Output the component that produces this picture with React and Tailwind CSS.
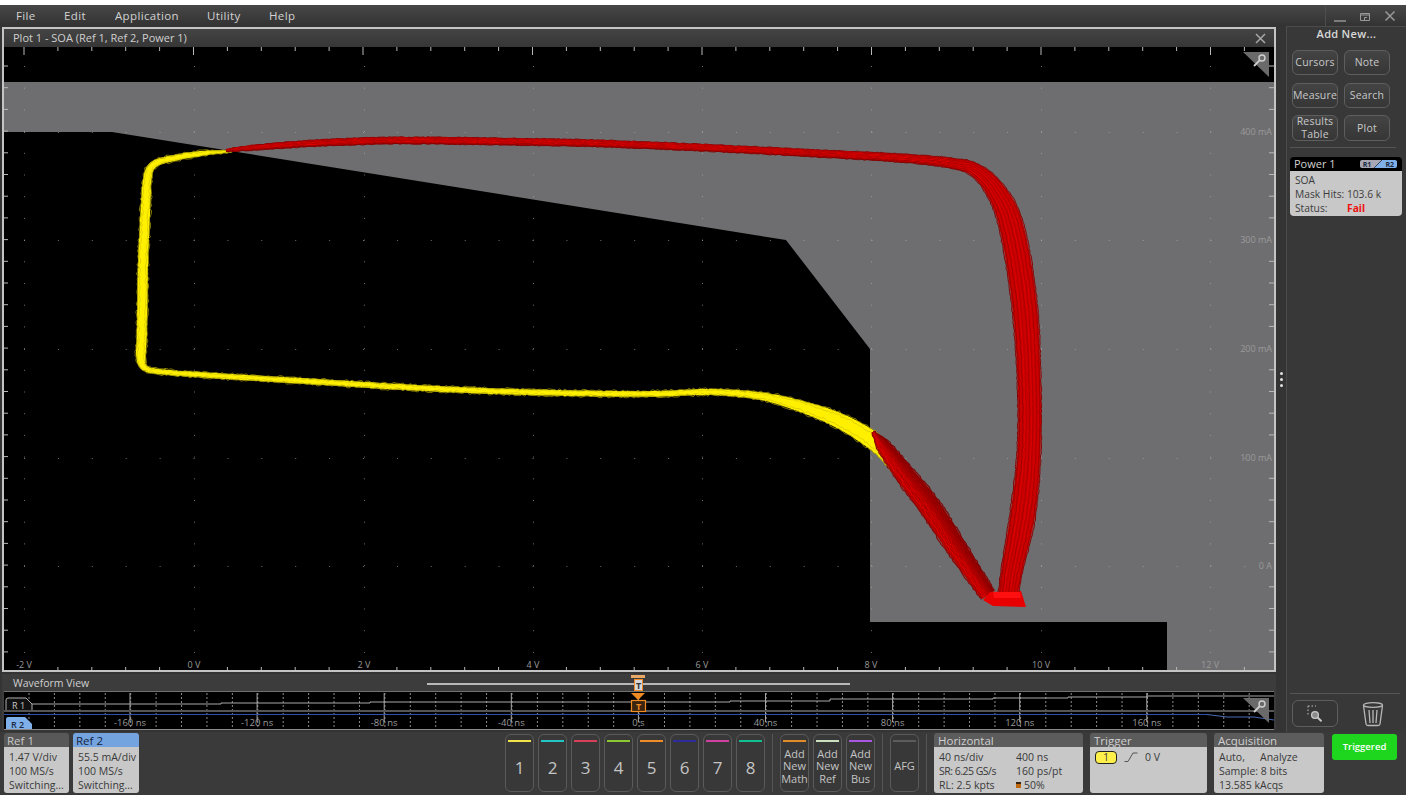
import React from "react";

// --- trace helpers: catmull-rom sampling of [x, y, halfWidth] points
const sample = (pts) => {
  const out = [];
  for (let i = 0; i < pts.length - 1; i++) {
    const p0 = pts[Math.max(i - 1, 0)];
    const p1 = pts[i];
    const p2 = pts[i + 1];
    const p3 = pts[Math.min(i + 2, pts.length - 1)];
    // about one sample every 2.5px so the jitter stays fine grained
    const steps = Math.max(2, Math.ceil(Math.hypot(p2[0] - p1[0], p2[1] - p1[1]) / 2.5));
    for (let s = 0; s < steps; s++) {
      const t = s / steps;
      const c = [0, 1, 2].map(
        (k) =>
          0.5 *
          (2 * p1[k] +
            (p2[k] - p0[k]) * t +
            (2 * p0[k] - 5 * p1[k] + 4 * p2[k] - p3[k]) * t * t +
            (3 * p1[k] - p0[k] - 3 * p2[k] + p3[k]) * t * t * t)
      );
      out.push(c);
    }
  }
  out.push(pts[pts.length - 1]);
  return out;
};

const noise = (n) => {
  const v = Math.sin(n * 12.9898) * 43758.5453;
  return v - Math.floor(v) - 0.5;
};

const offsetLine = (line, t, jitter = 0, seed = 1) =>
  line.map((p, i) => {
    const a = line[Math.max(i - 1, 0)];
    const b = line[Math.min(i + 1, line.length - 1)];
    const dx = b[0] - a[0];
    const dy = b[1] - a[1];
    const len = Math.hypot(dx, dy) || 1;
    const d = p[2] * t + noise(i * 1.7 + seed) * jitter;
    return [p[0] + (-dy / len) * d, p[1] + (dx / len) * d];
  });

const toPath = (pts) =>
  "M" + pts.map((p) => p[0].toFixed(1) + " " + p[1].toFixed(1)).join("L");

const YELLOW = [
  [232, 151, 1.2],
  [210, 152.5, 2.2],
  [187, 155.5, 3],
  [165, 160, 3.4],
  [153, 165, 3.8],
  [148, 175, 4.4],
  [146, 197, 5],
  [144.5, 230, 5.2],
  [143, 263, 5.4],
  [142, 330, 5.4],
  [141, 357, 5],
  [145, 368, 3.2],
  [163, 372, 2.8],
  [220, 376, 2.8],
  [320, 382, 3],
  [420, 388, 3],
  [520, 392, 3],
  [640, 394, 3],
  [710, 392, 3.2],
  [760, 396, 4],
  [800, 406, 6],
  [840, 421, 8],
  [873, 441, 9],
  [886, 458, 5],
  [899, 479, 1],
];

const RED_TOP = [
  [226, 150.5, 1],
  [250, 148, 2.4],
  [320, 143, 3.2],
  [400, 140.5, 3.4],
  [500, 141.5, 3.4],
  [600, 143.5, 3.4],
  [700, 147.5, 3.4],
  [800, 152.5, 3.6],
  [900, 158, 4.2],
  [950, 163, 5.2],
  [975, 170, 7],
  [995, 190, 10],
  [1011, 225, 12.5],
  [1024, 300, 13],
  [1029, 380, 12],
  [1029, 450, 12],
  [1023, 513, 13],
  [1012, 570, 11],
  [1008, 597, 10],
];

const RED_LEFT = [
  [873, 432, 1],
  [884, 447, 7],
  [906, 476, 10],
  [930, 507, 11],
  [960, 553, 10],
  [988, 595, 8],
];

const Band = ({ pts, colors, jitter, base, seed = 1, weight = 0.8 }) => {
  const line = sample(pts);
  const edgeA = offsetLine(line, 0.95);
  const edgeB = offsetLine(line, -0.95).reverse();
  return (
    <g fill="none">
      <path d={toPath([...edgeA, ...edgeB]) + "Z"} fill={base} />
      {colors.map((c, i) => {
        const t = colors.length > 1 ? -1 + (2 * i) / (colors.length - 1) : 0;
        return (
          <path
            key={i}
            d={toPath(offsetLine(line, t, jitter, seed + i * 3.1))}
            stroke={c}
            strokeWidth={weight}
          />
        );
      })}
    </g>
  );
};

const Traces = () => (
  <g>
    <Band
      pts={YELLOW}
      base="#fff000"
      jitter={2.2}
      colors={["#a89c00", "#d8cc00", "#fff000", "#fff000", "#d8cc00", "#a89c00"]}
    />
    <Band
      pts={RED_LEFT}
      base="#a30000"
      jitter={1.4}
      seed={9}
      weight={1.2}
      colors={["#7d0505", "#860000", "#8c0000", "#960000", "#a80000", "#b30000", "#c80000", "#d40000", "#cc0000", "#e00000", "#c00000", "#8c0505"]}
    />
    <polygon points="990,592 1021,591 1026,607 993,606 983,600" fill="#e80000" />
    <Band
      pts={RED_TOP}
      base="#c80000"
      jitter={1}
      seed={4}
      weight={1}
      colors={["#8c0000", "#a00000", "#cc0000", "#a80000", "#d80000", "#b00000", "#e00000", "#a80000", "#d00000", "#b80000", "#e00000", "#a00000", "#c80000", "#980000", "#850000"]}
    />
    <polygon points="993,592 1020,592 1021,598 994,598" fill="#ff1010" />
  </g>
);

// --- scope graticule of the plot
const majorX = [24, 194, 364, 533, 702, 871, 1041, 1210];
const majorY = [132, 240, 349, 458, 566];

const Graticule = () => {
  const dots = [];
  majorX.forEach((x) => {
    for (let y = 66; y < 660; y += 21.7) dots.push([x, y]);
  });
  majorY.forEach((y) => {
    for (let x = 24; x < 1270; x += 33.9) dots.push([x, y]);
  });
  const xTicks = [];
  for (let x = 24; x < 1274; x += 33.9) xTicks.push(x);
  const yTicks = [];
  for (let y = 66; y < 668; y += 21.7) yTicks.push(y);
  return (
    <g>
      {dots.map((d, i) => (
        <rect key={i} x={d[0]} y={d[1]} width="1" height="1" fill="#b5b5b5" opacity="0.6" />
      ))}
      {xTicks.map((x, i) => {
        const major = i % 5 === 0;
        return (
          <g key={i} stroke="#b8b8b8" strokeWidth="1">
            <line x1={x} x2={x} y1="47" y2={major ? 55 : 51} />
            {/* the axis labels sit where the bottom major ticks would be */}
            {!major && <line x1={x} x2={x} y1="667" y2="670" />}
          </g>
        );
      })}
      {yTicks.map((y, i) => (
        <g key={i} stroke="#b8b8b8" strokeWidth="1">
          <line x1="4" x2="8" y1={y} y2={y} />
          {(i - 3) % 5 !== 0 && <line x1="1269" x2="1274" y1={y} y2={y} />}
        </g>
      ))}
    </g>
  );
};

// corner zoom pin
const Pin = ({ x, y }) => (
  <g transform={`translate(${x} ${y})`}>
    <polygon points="0,0 26,0 26,25" fill="#6a6a6a" />
    <circle cx="19" cy="6" r="3" fill="none" stroke="#d0d0d0" strokeWidth="1.4" />
    <line x1="16.8" y1="8.2" x2="11" y2="14" stroke="#d0d0d0" strokeWidth="1.8" />
  </g>
);

const PlotChart = () => (
  <svg className="block w-[1270px] h-[623px]" viewBox="4 47 1270 623">
    <rect x="4" y="47" width="1270" height="623" fill="#000" />
    <polygon
      points="4,82 1274,82 1274,670 1167,670 1167,622 870,622 870,349 786,240 112,132 4,132"
      fill="#6e6e70"
    />
    <Graticule />
    <Traces />
    <Pin x={1243} y={52} />
    <g fontFamily="'Open Sans', sans-serif" fontSize="9" fill="#9a9a9a">
      {["-2 V", "0 V", "2 V", "4 V", "6 V", "8 V", "10 V", "12 V"].map((t, i) => (
        <text key={t} x={majorX[i]} y="668" textAnchor="middle">
          {t}
        </text>
      ))}
      {["400 mA", "300 mA", "200 mA", "100 mA", "0 A"].map((t, i) => (
        <text key={t} x="1272" y={majorY[i] + 3} textAnchor="end">
          {t}
        </text>
      ))}
    </g>
  </svg>
);

const timeLabels = ["-160 ns", "-120 ns", "-80 ns", "-40 ns", "0 s", "40 ns", "80 ns", "120 ns", "160 ns"];

const WaveformStrip = () => {
  const minor = [];
  for (let x = 29; x < 1274; x += 25.42) minor.push(x);
  return (
    <svg className="block w-[1270px] h-[37px]" viewBox="4 692 1270 37">
      <rect x="4" y="692" width="1270" height="37" fill="#000" />
      {minor.map((x) => (
        <line key={x} x1={x} x2={x} y1="693" y2="729" stroke="#c8c8c8" strokeWidth="1" strokeDasharray="2 2" opacity="0.7" />
      ))}
      {timeLabels.map((t, i) => (
        <line key={t} x1={130 + i * 127.1} x2={130 + i * 127.1} y1="693" y2="722" stroke="#a8a8a8" strokeWidth="1" />
      ))}
      <path d="M32 704H221V703H370V702H624V702H730V701H830V699H993V698H1068V697H1147V696H1274" fill="none" stroke="#a8a8a8" strokeWidth="1" />
      <path d="M6 711V700Q6 698 8 698H26L32 704L32 711Z" fill="#111" stroke="#b0b0b0" strokeWidth="1" />
      <text x="12" y="709" fontFamily="'Open Sans', sans-serif" fontSize="9" fill="#c8c8c8">R 1</text>
      <rect x="4" y="710" width="1270" height="2" fill="#555" />
      <line x1="4" x2="1207" y1="714.5" y2="714.5" stroke="#2f4fa8" strokeWidth="1" />
      <path d="M1207 714.5L1227 717L1254 717L1274 720" fill="none" stroke="#4a6ab8" strokeWidth="1" />
      <path d="M6 729V719Q6 717 8 717H25L32 724V729Z" fill="#7fb0ea" />
      <text x="11" y="727.5" fontFamily="'Open Sans', sans-serif" fontSize="9" fontWeight="600" fill="#1c2a44">R 2</text>
      <g fontFamily="'Open Sans', sans-serif" fontSize="9.5" fill="#9a9a9a">
        {timeLabels.map((t, i) => (
          <text key={t} x={130 + i * 127.1} y="726" textAnchor="middle">
            {t}
          </text>
        ))}
      </g>
      <polygon points="631,693 645,693 638,700" fill="#f08a24" />
      <rect x="631.5" y="700.5" width="14" height="11" fill="#3a2410" stroke="#f08a24" strokeWidth="1.2" />
      <text x="638.5" y="710" textAnchor="middle" fontFamily="'Open Sans', sans-serif" fontSize="9" fontWeight="700" fill="#f08a24">T</text>
      <Pin x={1243} y={698} />
    </svg>
  );
};

const PanelButton = ({ children, className = "" }) => (
  <div
    className={
      "w-[46px] flex items-center justify-center text-center rounded-md border border-[#5e5e5e] bg-gradient-to-b from-[#444444] to-[#363636] text-[#c8c8c8] text-[10.5px] leading-[13px] tracking-[0.2px] " +
      className
    }
  >
    {children}
  </div>
);

const Channel = ({ color, children, big }) => (
  <div className="w-[29px] h-[58px] shrink-0 flex flex-col items-center rounded-md border border-[#5a5a5a] bg-[#383838] pt-[5px]">
    <div className={"w-[23px] h-[2px] shrink-0 " + color} />
    <div
      className={
        big
          ? "flex-1 flex items-center text-[17px] text-[#c4c4c4] pt-[2px]"
          : "flex-1 flex items-center text-center text-[11px] leading-[12.5px] text-[#c4c4c4]"
      }
    >
      {children}
    </div>
  </div>
);

const InfoCard = ({ title, titleClass, width, children }) => (
  <div className={"h-[60px] rounded-[3px] overflow-hidden flex flex-col shrink-0 " + width}>
    <div className={"h-[14px] shrink-0 px-[3px] text-[11.5px] leading-[15px] " + titleClass}>{title}</div>
    <div className="flex-1 bg-[#c8c8c8] text-[#3a3a3a] text-[10.5px] leading-[14px] px-[5px] pt-[3px] whitespace-nowrap">
      {children}
    </div>
  </div>
);

const Sep = () => <div className="w-px h-[58px] bg-[#555555] shrink-0" />;

const channels = [
  ["1", "bg-[#f0e44a]"],
  ["2", "bg-[#22c4c4]"],
  ["3", "bg-[#d8405a]"],
  ["4", "bg-[#8cc832]"],
  ["5", "bg-[#f08c28]"],
  ["6", "bg-[#2c2c9c]"],
  ["7", "bg-[#d040a0]"],
  ["8", "bg-[#10c090]"],
];

export default function App() {
  return (
    <div
      className="w-[1406px] h-[797px] overflow-hidden bg-white pt-[5px] flex flex-col"
      style={{ fontFamily: "'Open Sans', 'Noto Sans', sans-serif" }}
    >
      {/* Menu bar */}
      <div className="h-[21px] shrink-0 flex items-center bg-gradient-to-b from-[#474747] to-[#333333] text-[#d2d2d2] text-[11.5px] tracking-[0.35px]">
        <div className="flex w-[1325px] pl-[16px]">
          <span className="w-[48px]">File</span>
          <span className="w-[51px]">Edit</span>
          <span className="w-[92px]">Application</span>
          <span className="w-[62px]">Utility</span>
          <span>Help</span>
        </div>
        <div className="h-full w-px bg-[#4e4e4e]" />
        <div className="flex items-center flex-1 pl-[8px] gap-[13px] text-[#9a9a9a]">
          <svg width="12" height="12" viewBox="0 0 12 12"><path d="M0 11H12" stroke="currentColor" strokeWidth="1.4" /></svg>
          <svg width="12" height="12" viewBox="0 0 12 12" fill="none" stroke="currentColor"><path d="M1.5 3.5H10.5V10.5H1.5Z" /><path d="M1.5 5H10.5" /><path d="M5.5 10.5V7.5H8" /></svg>
          <svg width="12" height="12" viewBox="0 0 12 12" fill="none" stroke="currentColor" strokeWidth="1.5"><path d="M1.5 1.5L10.5 10.5M10.5 1.5L1.5 10.5" /></svg>
        </div>
      </div>

      {/* Middle */}
      <div className="h-[706px] shrink-0 flex bg-[#343434]">
        <div className="w-[1276px] pl-[2px] pt-[1px] shrink-0 flex flex-col gap-[2px]">
          <div className="w-[1274px] border-2 border-[#c4c4c4] border-b-[2px] flex flex-col">
            <div className="h-[18px] flex items-center justify-between bg-gradient-to-b from-[#444444] to-[#363636] pl-[9px] pr-[8px] pt-[1px] text-[#cfcfcf] text-[11px]">
              <span>Plot 1 - SOA (Ref 1, Ref 2, Power 1)</span>
              <svg width="11" height="11" viewBox="0 0 11 11" fill="none" stroke="#a8a8a8" strokeWidth="1.5"><path d="M1 1L10 10M10 1L1 10" /></svg>
            </div>
            <PlotChart />
          </div>
          <div className="relative w-[1274px] px-[2px] flex flex-col bg-[#3c3c3c]">
            <div className="h-[18px] flex items-center pl-[9px] pt-[3px] text-[#cfcfcf] text-[10.5px] border-b border-[#707070]">
              Waveform View
            </div>
            <WaveformStrip />
            <div className="absolute left-[425px] top-[9px] w-[423px] h-[2px] bg-[#b8b8b8]" />
            <div className="absolute left-[629px] top-[1px] w-[14px] h-[3px] bg-[#e8a868]" />
            <div className="absolute left-[632px] top-[5px] w-[9px] h-[12px] border border-[#f08a24] bg-[#d8d8d8] flex items-center justify-center text-[9px] font-bold leading-none text-[#333]">
              T
            </div>
            <div className="h-[1px] bg-[#8a8a8a]" />
          </div>
        </div>

        {/* gutter */}
        <div className="w-[10px] shrink-0 flex flex-col items-center justify-center gap-[3px]">
          <div className="w-[3px] h-[3px] rounded-full bg-[#e0e0e0]" />
          <div className="w-[3px] h-[3px] rounded-full bg-[#e0e0e0]" />
          <div className="w-[3px] h-[3px] rounded-full bg-[#e0e0e0]" />
        </div>

        {/* Right panel */}
        <div className="flex-1 border-l border-t border-[#4c4c4c] flex flex-col px-[3px] pb-[5px] bg-[#383838]">
          <div className="h-[23px] flex items-center justify-center pb-[9px] font-semibold text-[11px] tracking-[0.3px] text-[#d8d8d8]">
            Add New...
          </div>
          <div className="grid grid-cols-[46px_46px] gap-x-[6px] gap-y-[8px] pl-[2px]">
            <PanelButton className="h-[25px]">Cursors</PanelButton>
            <PanelButton className="h-[25px]">Note</PanelButton>
            <PanelButton className="h-[25px]">Measure</PanelButton>
            <PanelButton className="h-[25px]">Search</PanelButton>
            <PanelButton className="h-[26px] -mt-[1px]">Results Table</PanelButton>
            <PanelButton className="h-[26px] -mt-[1px]">Plot</PanelButton>
          </div>
          <div className="h-px bg-[#555555] mt-[6px] mr-[7px]" />
          <div className="mt-[9px] w-[112px] rounded-[4px] overflow-hidden">
            <div className="h-[14px] bg-black flex items-center justify-between pl-[4px] pr-[5px] text-[#d0d0d0] text-[11px]">
              <span>Power 1</span>
              <span className="flex items-center h-[8px] rounded-[2px] overflow-hidden text-[7px] font-bold leading-none text-[#1a2a40]">
                <span className="h-full px-[3px] bg-[#a8a8b4] flex items-center">R1</span>
                <svg width="8" height="8" viewBox="0 0 8 8" className="bg-[#a8a8b4]"><path d="M0 8L8 0V8Z" fill="#7fb0ea" /><path d="M0 8L8 0" stroke="#1a2a40" strokeWidth="0.8" /></svg>
                <span className="h-full px-[3px] bg-[#7fb0ea] flex items-center">R2</span>
              </span>
            </div>
            <div className="h-[45px] bg-[#c8c8c8] text-[#3c3c3c] text-[10.25px] leading-[14px] px-[5px] pt-[2px]">
              <div>SOA</div>
              <div>Mask Hits: 103.6 k</div>
              <div className="flex">
                <span className="w-[52px]">Status:</span>
                <span className="font-bold text-[#ee1111]">Fail</span>
              </div>
            </div>
          </div>
          <div className="flex-1" />
          <div className="h-px bg-[#555555] mr-[3px]" />
          <div className="flex items-center mt-[6px] pl-[2px]">
            <div className="w-[46px] h-[27px] rounded-md border border-[#5e5e5e] bg-[#363636] flex items-center justify-center">
              <svg width="20" height="20" viewBox="0 0 20 20" fill="none">
                <path d="M3 2H11M3 2V12" stroke="#c0c0c0" strokeWidth="1" strokeDasharray="1.5 2" />
                <circle cx="10" cy="11" r="3.4" fill="#8a8a8a" stroke="#c8c8c8" strokeWidth="1.3" />
                <path d="M12.6 13.6L16.5 17.2" stroke="#c8c8c8" strokeWidth="2" />
              </svg>
            </div>
            <svg width="22" height="26" viewBox="0 0 22 26" fill="none" stroke="#b8b8b8" strokeWidth="1.3" className="ml-[24px]">
              <ellipse cx="11" cy="4" rx="9.5" ry="2.4" />
              <path d="M1.5 4.5L4 23Q4.2 24.5 6 24.5H16Q17.8 24.5 18 23L20.5 4.5" />
              <path d="M7 9L8 22M11 9V22M15 9L14 22" />
            </svg>
          </div>
        </div>
      </div>

      {/* Bottom bar */}
      <div className="h-[63px] shrink-0 flex items-start bg-[#3a3a3a] pt-[1px] pl-[4px]">
        <div className="flex gap-[4px]">
          <InfoCard title="Ref 1" titleClass="bg-[#585858] text-[#c8c8c8]" width="w-[65px]">
            <div>1.47 V/div</div>
            <div>100 MS/s</div>
            <div>Switching...</div>
          </InfoCard>
          <InfoCard title="Ref 2" titleClass="bg-[#74a4e0] text-[#14233c]" width="w-[66px]">
            <div>55.5 mA/div</div>
            <div>100 MS/s</div>
            <div>Switching...</div>
          </InfoCard>
        </div>
        <div className="flex items-center gap-[4px] ml-[366px] mt-[1px]">
          {channels.map(([n, c]) => (
            <Channel key={n} color={c} big>
              {n}
            </Channel>
          ))}
          <div className="ml-[3px]"><Sep /></div>
          <div className="flex gap-[4px] ml-[3px]">
            <Channel color="bg-[#e08a28]">Add<br />New<br />Math</Channel>
            <Channel color="bg-[#c8e0c0]">Add<br />New<br />Ref</Channel>
            <Channel color="bg-[#a858e0]">Add<br />New<br />Bus</Channel>
          </div>
          <div className="ml-[3px]"><Sep /></div>
          <div className="ml-[3px]"><Channel color="bg-[#5c5c5c]">AFG</Channel></div>
          <div className="ml-[3px]"><Sep /></div>
        </div>
        <div className="flex gap-[7px] ml-[7px]">
          <InfoCard title="Horizontal" titleClass="bg-[#5c5c5c] text-[#d0d0d0] pl-[4px]" width="w-[149px]">
            <div className="grid grid-cols-[77px_1fr]">
              <span>40 ns/div</span>
              <span>400 ns</span>
              <span className="tracking-[-0.5px]">SR: 6.25 GS/s</span>
              <span>160 ps/pt</span>
              <span>RL: 2.5 kpts</span>
              <span className="flex items-center gap-[3px]">
                <span className="w-[5px] h-[6px] bg-[#c06810] border-t-2 border-[#3a2410]" />
                50%
              </span>
            </div>
          </InfoCard>
          <InfoCard title="Trigger" titleClass="bg-[#5c5c5c] text-[#d0d0d0] pl-[4px]" width="w-[117px]">
            <div className="flex items-center">
              <span className="w-[22px] h-[13px] rounded-[4px] border border-[#222] bg-[#fff14a] flex items-center justify-center text-[10px] leading-none">
                1
              </span>
              <svg width="14" height="10" viewBox="0 0 14 10" fill="none" stroke="#555" className="ml-[7px]">
                <path d="M0.5 9.5H4L9 1H13.5" />
              </svg>
              <span className="ml-[7px]">0 V</span>
            </div>
          </InfoCard>
          <InfoCard title="Acquisition" titleClass="bg-[#5c5c5c] text-[#d0d0d0] pl-[4px]" width="w-[110px]">
            <div className="flex">
              <span className="w-[41px]">Auto,</span>
              <span>Analyze</span>
            </div>
            <div>Sample: 8 bits</div>
            <div>13.585 kAcqs</div>
          </InfoCard>
        </div>
        <div className="ml-[8px] mt-[1px] w-[65px] h-[26px] rounded-[3px] bg-[#1ed61e] flex items-center justify-center text-white font-semibold text-[9.5px]">
          Triggered
        </div>
      </div>
    </div>
  );
}
